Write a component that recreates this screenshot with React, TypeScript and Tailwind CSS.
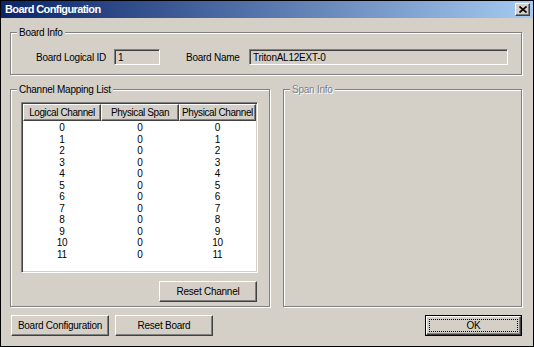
import React from 'react';

const raised =
  'bg-[#d4d0c8] border border-t-white border-l-white border-b-[#404040] border-r-[#404040] shadow-[inset_-1px_-1px_0_#808080]';
const etched = 'border border-[#808080] shadow-[1px_1px_0_#fff,inset_1px_1px_0_#fff]';
const sunken =
  'border border-t-[#808080] border-l-[#808080] border-b-white border-r-white shadow-[inset_1px_1px_0_#404040,inset_-1px_-1px_0_#d4d0c8]';

type GroupProps = {
  title: string;
  disabled?: boolean;
  className?: string;
  children?: React.ReactNode;
};

// Win2k style group box with the caption sitting on the frame line
const GroupBox: React.FC<GroupProps> = ({ title, disabled, className, children }) => (
  <div className={`relative ${etched} ${className ?? ''}`}>
    <span
      className={`absolute top-[-7px] left-[6px] px-[2px] bg-[#d4d0c8] leading-[13px] ${
        disabled ? 'text-[#808080] [text-shadow:1px_1px_0_#fff]' : ''
      }`}
    >
      {title}
    </span>
    {children}
  </div>
);

const Button: React.FC<{ label: string; className?: string }> = ({ label, className }) => (
  <button className={`${raised} h-[21px] w-[98px] flex items-center justify-center leading-[13px] ${className ?? ''}`}>
    {label}
  </button>
);

const rows = Array.from({ length: 12 }, (_, i) => ({ logical: i, span: 0, physical: i }));

export default function App() {
  return (
    <div className="w-[534px] h-[347px] border border-black bg-[#d4d0c8] flex flex-col text-[10px] tracking-[-0.25px] whitespace-nowrap text-black font-['Liberation_Sans',Arial,sans-serif] overflow-hidden">
      {/* title bar */}
      <div className="h-[17px] shrink-0 flex items-center justify-between pl-[4px] pr-[3px] bg-[linear-gradient(to_right,#0a246a,#a6caf0)]">
        <span className="text-white font-bold text-[11px] leading-[13px] tracking-[-0.6px]">
          Board Configuration
        </span>
        <button className={`${raised} w-[15px] h-[13px] flex items-center justify-center`}>
          <svg width="8" height="7" viewBox="0 0 8 7">
            <path d="M0.5 0.5 L7.5 6.5 M7.5 0.5 L0.5 6.5" stroke="#000" strokeWidth="1.6" fill="none" />
          </svg>
        </button>
      </div>

      <div className="flex-1 flex flex-col pl-[9px] pr-[11px]">
        {/* Board Info */}
        <GroupBox title="Board Info" className="mt-[14px] h-[43px] w-[512px]">
          <div className="flex items-center h-[16px] mt-[16px] pl-[25px]">
            <span className="w-[78px] leading-[13px]">Board Logical ID</span>
            <div className={`${sunken} w-[46px] h-[16px] pl-[3px] flex items-center leading-[13px]`}>1</div>
            <span className="ml-[26px] w-[63px] leading-[13px]">Board Name</span>
            <div className={`${sunken} w-[259px] h-[16px] pl-[3px] flex items-center leading-[13px]`}>
              TritonAL12EXT-0
            </div>
          </div>
        </GroupBox>

        <div className="flex mt-[14px]">
          {/* Channel Mapping List */}
          <GroupBox title="Channel Mapping List" className="w-[260px] h-[218px]">
            <div className="flex flex-col w-[237px] ml-[10px] mt-[12px]">
              <div className={`${sunken} bg-white h-[171px] p-[1px] flex flex-col`}>
                <div className="flex h-[17px] shrink-0">
                  {['Logical Channel', 'Physical Span', 'Physical Channel'].map((h, i) => (
                    <div
                      key={h}
                      className={`${raised} ${i === 2 ? 'w-[77px]' : 'w-[78px]'} flex items-center justify-center leading-[13px] tracking-[-0.4px]`}
                    >
                      {h}
                    </div>
                  ))}
                </div>
                <div className="flex flex-col pt-[1px]">
                  {rows.map((r) => (
                    <div key={r.logical} className="grid grid-cols-[78px_78px_77px] leading-[11.5px] text-center">
                      <span>{r.logical}</span>
                      <span>{r.span}</span>
                      <span>{r.physical}</span>
                    </div>
                  ))}
                </div>
              </div>
              <Button label="Reset Channel" className="self-end mr-[1px] mt-[8px]" />
            </div>
          </GroupBox>

          {/* Span Info (disabled) */}
          <GroupBox title="Span Info" disabled className="ml-auto w-[239px] h-[218px]" />
        </div>

        {/* bottom buttons */}
        <div className="flex items-center mt-[8px] gap-[6px]">
          <Button label="Board Configuration" className="ml-[1px]" />
          <Button label="Reset Board" />
          <button className="ml-auto w-[97px] h-[21px] border border-black p-0">
            <div className={`${raised} w-full h-full p-[2px]`}>
              <div className="w-full h-full border border-dotted border-black flex items-center justify-center leading-[13px]">
                OK
              </div>
            </div>
          </button>
        </div>
      </div>
    </div>
  );
}
